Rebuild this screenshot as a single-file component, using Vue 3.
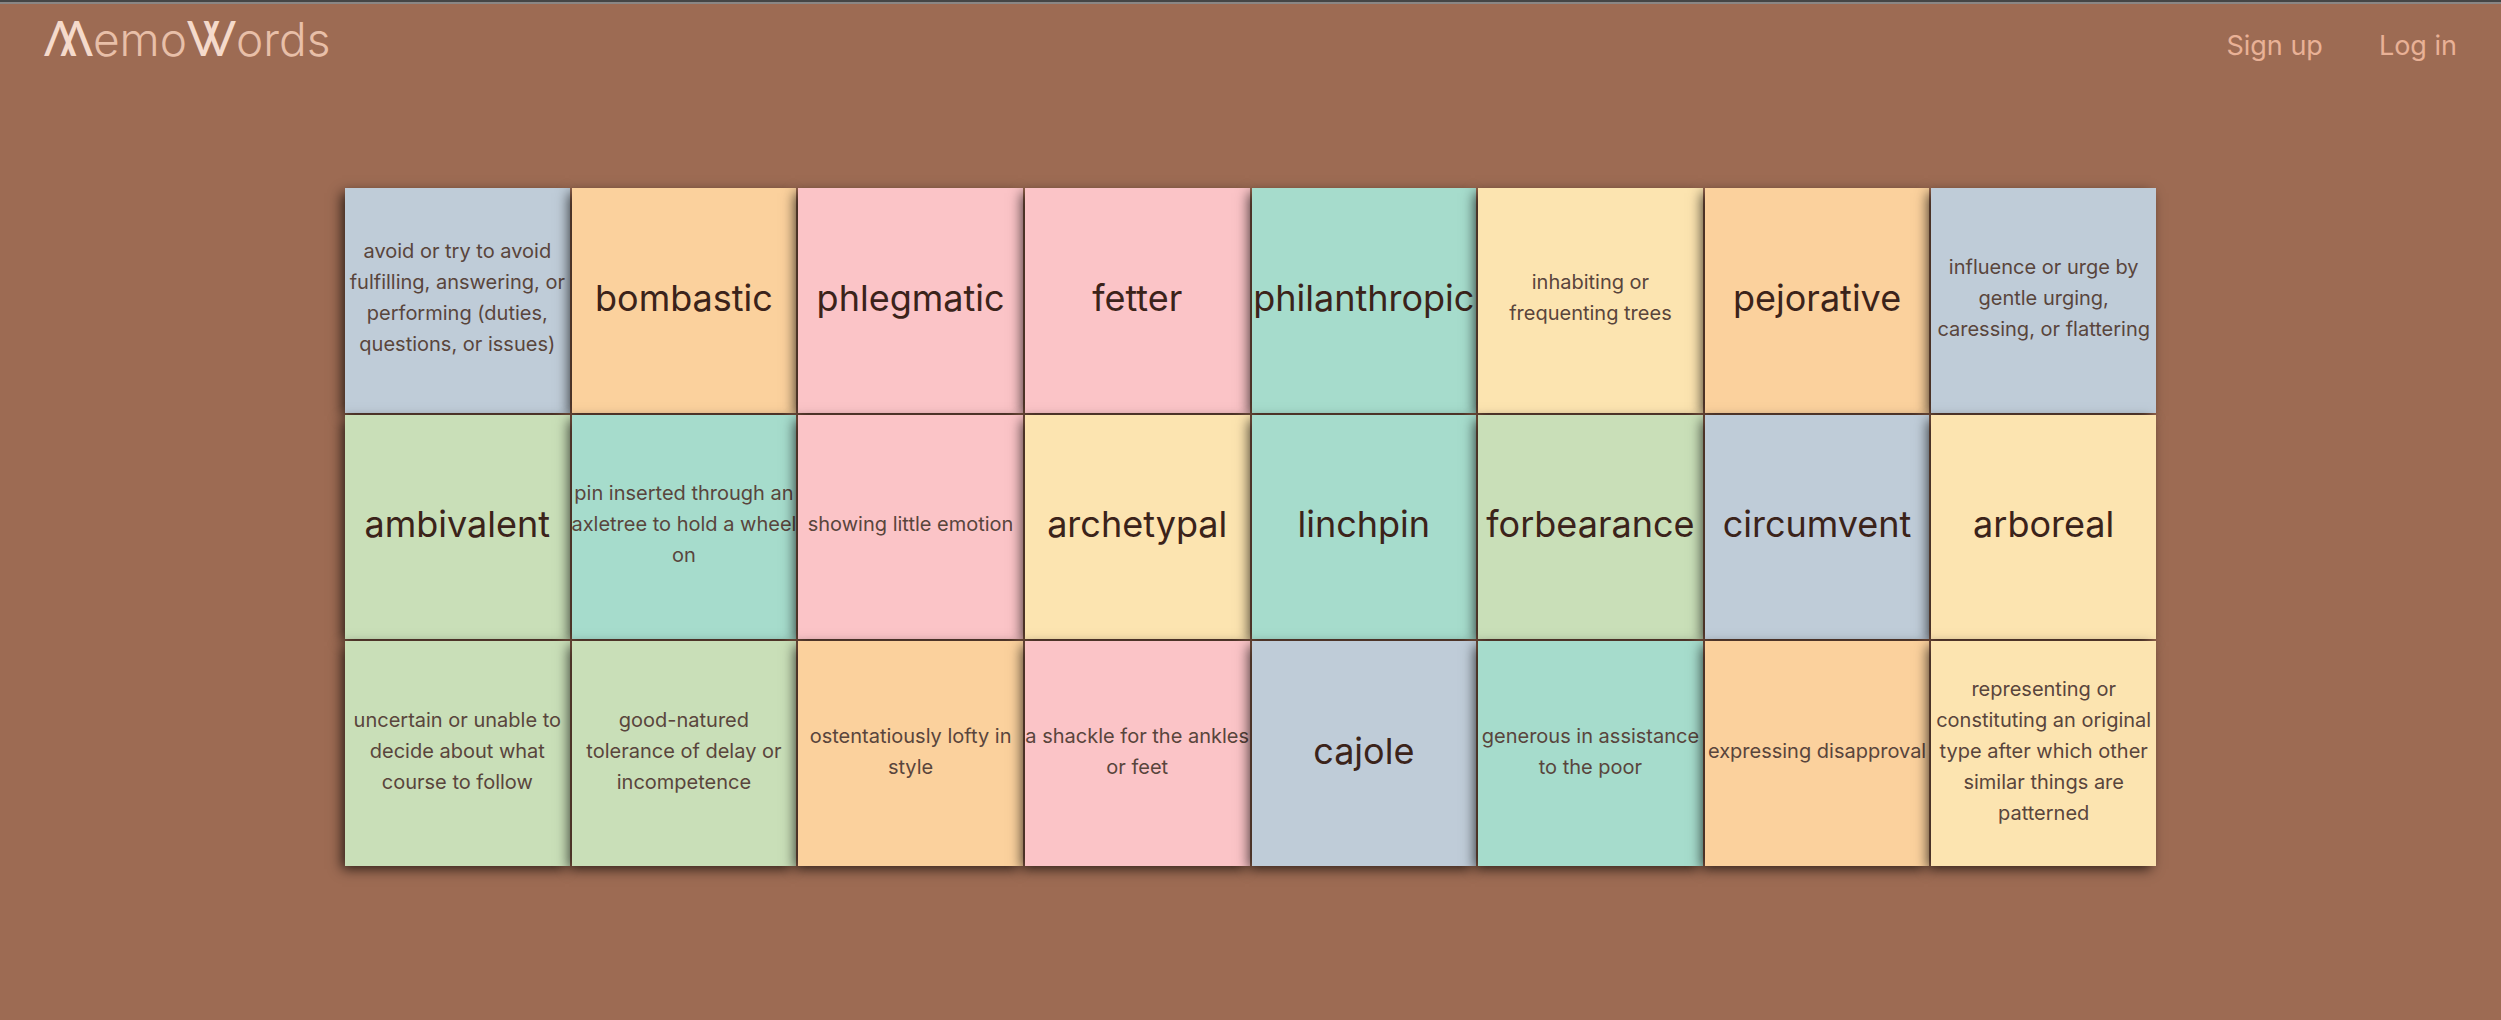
<script setup>
const cards = [
  { tone: 'blue', text: 'avoid or try to avoid\nfulfilling, answering, or\nperforming (duties,\nquestions, or issues)' },
  { tone: 'orange', word: true, text: 'bombastic' },
  { tone: 'pink', word: true, text: 'phlegmatic' },
  { tone: 'pink', word: true, text: 'fetter' },
  { tone: 'teal', word: true, text: 'philanthropic' },
  { tone: 'yellow', text: 'inhabiting or\nfrequenting trees' },
  { tone: 'orange', word: true, text: 'pejorative' },
  { tone: 'blue', text: 'influence or urge by\ngentle urging,\ncaressing, or flattering' },
  { tone: 'green', word: true, text: 'ambivalent' },
  { tone: 'teal', text: 'pin inserted through an\naxletree to hold a wheel\non' },
  { tone: 'pink', text: 'showing little emotion' },
  { tone: 'yellow', word: true, text: 'archetypal' },
  { tone: 'teal', word: true, text: 'linchpin' },
  { tone: 'green', word: true, text: 'forbearance' },
  { tone: 'blue', word: true, text: 'circumvent' },
  { tone: 'yellow', word: true, text: 'arboreal' },
  { tone: 'green', text: 'uncertain or unable to\ndecide about what\ncourse to follow' },
  { tone: 'green', text: 'good-natured\ntolerance of delay or\nincompetence' },
  { tone: 'orange', text: 'ostentatiously lofty in\nstyle' },
  { tone: 'pink', text: 'a shackle for the ankles\nor feet' },
  { tone: 'blue', word: true, text: 'cajole' },
  { tone: 'teal', text: 'generous in assistance\nto the poor' },
  { tone: 'orange', text: 'expressing disapproval' },
  { tone: 'yellow', text: 'representing or\nconstituting an original\ntype after which other\nsimilar things are\npatterned' },
]
</script>

<template>
  <div class="page">
    <header class="bar">
      <a class="logo" href="#" aria-label="MemoWords">
        <span class="peak">Λ</span><span class="peak cross">Λ</span><span>emo</span><span class="peak">V</span><span class="peak cross">V</span><span>ords</span>
      </a>
      <nav class="links">
        <a href="#signup">Sign up</a>
        <a href="#login">Log in</a>
      </nav>
    </header>
    <main class="board">
      <button
        v-for="card in cards"
        :key="card.text"
        type="button"
        class="card"
        :class="[card.tone, { word: card.word }]"
      >{{ card.text }}</button>
    </main>
  </div>
</template>

<style>
body {
  margin: 0;
  background: #9d6b53;
}
</style>

<style scoped>
.page {
  box-sizing: border-box;
  min-height: 100vh;
  border-top: 2px solid #454545;
  box-shadow: inset 0 2px #8a8684;
  background: #9d6b53;
  font-family: Inter, "Open Sans", sans-serif;
}
.bar {
  display: flex;
  justify-content: space-between;
  align-items: center;
  height: 88px;
  padding: 0 44px;
}
.logo {
  display: flex;
  align-items: baseline;
  margin-bottom: 16px;
  color: #e8bfa8;
  font-size: 46px;
  font-weight: 300;
  line-height: 64px;
  text-decoration: none;
}
.peak {
  color: #f5dacb;
  font-family: Lato, sans-serif;
  font-size: 48px;
  font-weight: 400;
}
.cross {
  margin-left: -16px;
}
.links {
  display: flex;
  gap: 56px;
}
.links a {
  color: #e9b196;
  font-size: 27px;
  line-height: 36px;
  text-decoration: none;
}
.board {
  display: grid;
  grid-template-columns: repeat(8, minmax(0, 1fr));
  gap: 2px;
  max-width: 1811px;
  margin: 98px auto 0;
}
.card {
  display: flex;
  align-items: center;
  justify-content: center;
  box-sizing: border-box;
  aspect-ratio: 1;
  min-width: 0;
  padding: 0 0 4px;
  border: 0;
  overflow: hidden;
  box-shadow: -4px 4px 12px -1px rgba(0, 0, 0, 0.72);
  color: #59453c;
  font-family: inherit;
  font-size: 20px;
  line-height: 31px;
  text-align: center;
  white-space: pre;
  cursor: pointer;
}
.word {
  color: #3b231a;
  font-size: 36px;
}
.blue { background: #bfccd8; }
.orange { background: #fbd19d; }
.pink { background: #fbc4c7; }
.teal { background: #a6dccc; }
.yellow { background: #fce4b0; }
.green { background: #c9dfb8; }
</style>
